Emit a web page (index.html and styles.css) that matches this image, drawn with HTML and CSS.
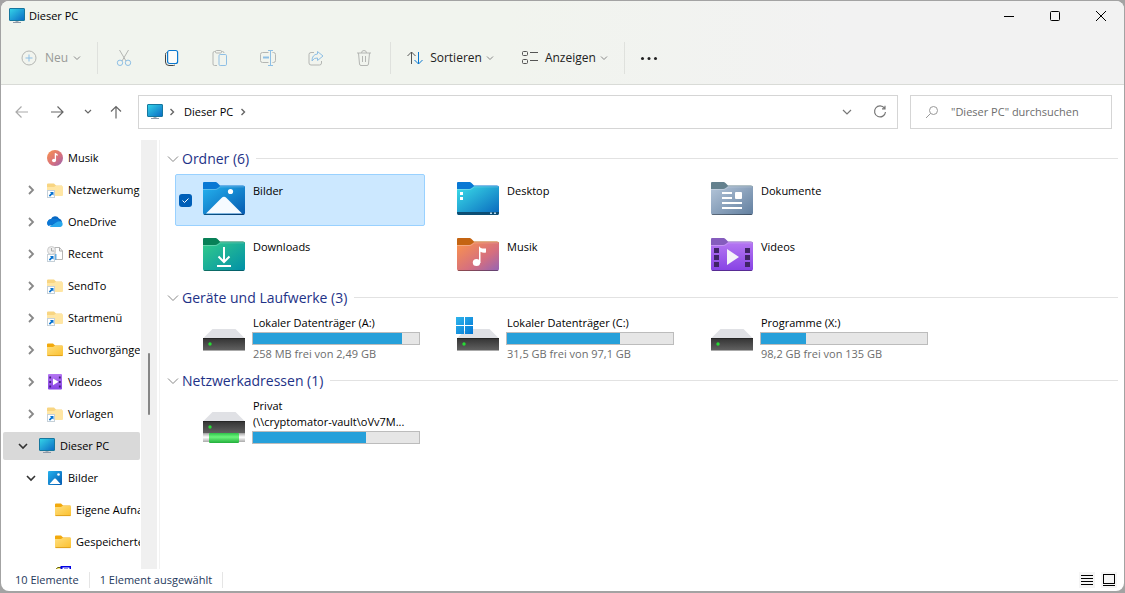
FILE: index.html
```html
<!DOCTYPE html>
<html lang="de">
<head>
<meta charset="utf-8">
<title>Dieser PC</title>
<link rel="stylesheet" href="styles.css">
</head>
<body>
<svg class="defs" aria-hidden="true">
  <defs>
    <linearGradient id="g-pc" x1="0" y1="0" x2="1" y2="1"><stop offset="0" stop-color="#35d5e8"/><stop offset="1" stop-color="#0a69c4"/></linearGradient>
    <linearGradient id="g-blue" x1="0" y1="0" x2="1" y2="1"><stop offset="0" stop-color="#25b2ee"/><stop offset="1" stop-color="#0459b0"/></linearGradient>
    <linearGradient id="g-desk" x1="0" y1="0" x2="1" y2="1"><stop offset="0" stop-color="#3bdde8"/><stop offset="1" stop-color="#0866bd"/></linearGradient>
    <linearGradient id="g-doc" x1="0" y1="0" x2="1" y2="1"><stop offset="0" stop-color="#b4c5d9"/><stop offset="1" stop-color="#627f9f"/></linearGradient>
    <linearGradient id="g-down" x1="0" y1="0" x2="1" y2="1"><stop offset="0" stop-color="#33cb8b"/><stop offset="1" stop-color="#008fa8"/></linearGradient>
    <linearGradient id="g-music" x1="0" y1="0" x2="1" y2="1"><stop offset="0" stop-color="#fb944c"/><stop offset=".6" stop-color="#d56f7f"/><stop offset="1" stop-color="#9464b5"/></linearGradient>
    <linearGradient id="g-video" x1="0" y1="0" x2="0" y2="1"><stop offset="0" stop-color="#b577f2"/><stop offset="1" stop-color="#8642e4"/></linearGradient>
    <linearGradient id="g-yellow" x1="0" y1="0" x2="1" y2="1"><stop offset="0" stop-color="#ffdf7e"/><stop offset="1" stop-color="#fbc02e"/></linearGradient>
    <linearGradient id="g-drive" x1="0" y1="0" x2="0" y2="1"><stop offset="0" stop-color="#333"/><stop offset="1" stop-color="#606060"/></linearGradient>
    <linearGradient id="g-win" x1="0" y1="0" x2="1" y2="1"><stop offset="0" stop-color="#2fb5ec"/><stop offset="1" stop-color="#0276d4"/></linearGradient>
    <linearGradient id="g-pipe" x1="0" y1="0" x2="0" y2="1"><stop offset="0" stop-color="#2fc24a"/><stop offset=".4" stop-color="#6bf57c"/><stop offset="1" stop-color="#22ae3b"/></linearGradient>
    <linearGradient id="g-tube" x1="0" y1="0" x2="0" y2="1"><stop offset="0" stop-color="#bbb"/><stop offset=".4" stop-color="#fff"/><stop offset="1" stop-color="#aaa"/></linearGradient>
  </defs>
  <symbol id="i-pc" viewBox="0 0 16 16"><path d="M6.500 12h3v2h-3z" fill="#a4acb5"/><path d="M4 14h8v1H4z" fill="#8d98a8"/><rect x=".5" y=".5" width="15" height="12" rx=".5" fill="url(#g-pc)" stroke="#16779e"/></symbol>
  <symbol id="i-folder" viewBox="0 0 16 16"><path d="M0 12V2.500Q0 1.500 1 1.500h5L8 3.500h7.500V13H1Z" fill="#f2a90c"/><path d="M0 5h6l1.500-1H15q1 0 1 1v8q0 1-1 1H1q-1 0-1-1Z" fill="url(#g-yellow)"/><path d="M.5 13.600h15" stroke="#dfa01d"/></symbol>
  <symbol id="i-link" viewBox="0 0 16 16"><path d="M0 12V2.500Q0 1.500 1 1.500h6L9 3.500h6V13H1Z" fill="#f8d582"/><path d="M0 5h7l1.500-1H15q1 0 1 1v8q0 1-1 1H1q-1 0-1-1Z" fill="#ffe6a4"/><use href="#i-arrow"/></symbol>
  <symbol id="i-arrow" viewBox="0 0 16 16"><rect x=".5" y="8.500" width="7" height="7" fill="#fff" stroke="#c5d0d8"/><path d="M3 10h3.500v3.500L5.200 12.500 3 14.700 1.800 13.500 4 11.200Z" fill="#0873d0"/></symbol>
  <symbol id="i-cloud" viewBox="0 0 16 16"><path d="M1 11a4 4 0 0 1 3-6 4.500 4.500 0 0 1 8-.5A4 4 0 0 1 15 8L7 12Z" fill="#0868c2"/><path d="M4 5a4 4 0 0 0-2.500 7L8 9 13 7Q11 4 4 5Z" fill="#0b77d5"/><path d="M2.500 12.700 9 8.500Q11 7 13.500 7.200A3 3 0 0 1 13.500 13H4Z" fill="#29a8ec"/></symbol>
  <symbol id="i-recent" viewBox="0 0 16 16"><path d="M8 13.500V1.500h4.500L15.500 5v8.500Z" fill="#fff" stroke="#b6b6b6"/><path d="M12.500 1.500V5h3" fill="none" stroke="#aaa"/><circle cx="4.500" cy="4.500" r="4" fill="#eee" stroke="#ccc"/><path d="M4.500 2v3h3" fill="none" stroke="#aaa"/><path d="M8.500 8v6" stroke="#6aaee1" stroke-width="2"/><use href="#i-arrow"/></symbol>
  <symbol id="i-note" viewBox="0 0 16 16"><circle cx="8" cy="8" r="8" fill="url(#g-music)"/><ellipse cx="7" cy="10.500" rx="2" ry="1.800" fill="#fff"/><path d="M8.400 10.500V3.200q.3 1.800 2.400 2" fill="none" stroke="#fff" stroke-width="1.300"/></symbol>
  <symbol id="i-film" viewBox="0 0 16 16"><rect x="1" width="14" height="15.500" rx="1" fill="url(#g-video)"/><path d="M3.200 2.500v12M12.800 2.500v12" stroke="#422078" stroke-width="1.800" stroke-dasharray="2 2.500"/><path d="m6 4.500 5.500 3.300L6 11.200Z" fill="#fff"/></symbol>
  <symbol id="i-image" viewBox="0 0 16 16"><rect x="1" y="1" width="14" height="14" rx="1" fill="url(#g-blue)"/><path d="m2.500 14 4.700-5.200q.8-.8 1.600 0L13.500 14Z" fill="#fff"/><circle cx="11.500" cy="4.500" r="1.300" fill="#fff"/></symbol>
  <symbol id="i-media" viewBox="0 0 16 16"><path d="M1.500 12V2.500L3 1.500h5V12Z" fill="#f7ec77" stroke="#686000"/><rect x="6.500" y=".5" width="9" height="12" fill="#fff" stroke="#0000e6" stroke-width="2"/><path d="M9 3h4" stroke="#22c"/></symbol>
  <symbol id="c-down" viewBox="0 0 10 10"><path d="m2 3.500 3 3 3-3" fill="none" stroke="currentColor"/></symbol>
  <symbol id="c-tree" viewBox="0 0 10 10"><path d="m1 3 4 4 4-4" fill="none" stroke="currentColor" stroke-width="1.600"/></symbol>
  <symbol id="c-treer" viewBox="0 0 10 10"><path d="m3 1 4 4-4 4" fill="none" stroke="currentColor" stroke-width="1.800"/></symbol>
  <symbol id="c-group" viewBox="0 0 12 12"><path d="m1 3.500 5 5 5-5" fill="none" stroke="currentColor"/></symbol>
  <symbol id="f-body" viewBox="0 0 42 34"><path d="M0 8V2Q0 1 1 1h11.500q1 0 2 1l2.500 2.500H40q2 0 2 2V31H0Z"/></symbol>
  <symbol id="f-front" viewBox="0 0 42 34"><path d="M0 8h12q1.500 0 3-1.200L17 5.300h23.500q1.500 0 1.500 1.500V32q0 2-2 2H2q-2 0-2-2Z"/><path d="M1 33.500h40" stroke="#000" stroke-opacity=".35"/><path d="M0 8.500h12.500q1.500 0 2.800-1.200L17 5.800h24" fill="none" stroke="#fff" stroke-opacity=".25"/></symbol>
  <symbol id="i-drive" viewBox="0 0 42 34"><path d="M9.500 12h23L42 21.500H0Z" fill="#e0e1e5"/><path d="M0 21h42v12H0Z" fill="url(#g-drive)"/><path d="M0 21.500h42" stroke="#262626"/><path d="M0 33.500h42" stroke="#aaa"/><circle cx="7" cy="27" r="1.700" fill="#26dc34"/></symbol>
</svg>

<div class="window">
  <header class="top">
    <div class="titlebar">
      <svg class="ic16"><use href="#i-pc"/></svg>
      <h1 class="title">Dieser PC</h1>
      <div class="caption">
        <button class="cap" aria-label="Minimieren"><svg viewBox="0 0 12 12"><path d="M1 6.500h10"/></svg></button>
        <button class="cap" aria-label="Maximieren"><svg viewBox="0 0 12 12"><rect x="1.500" y="1.500" width="9" height="9" rx="1"/></svg></button>
        <button class="cap" aria-label="Schließen"><svg viewBox="0 0 12 12"><path d="m1 1 10 10M11 1 1 11"/></svg></button>
      </div>
    </div>
    <div class="toolbar">
      <button class="cmd cmd-new" disabled><svg class="ic16" viewBox="0 0 16 16"><circle cx="8" cy="8" r="7" stroke="#b4b6b3"/><path d="M8 4.500v7M4.500 8h7" stroke="#8ebfe5"/></svg>Neu<svg class="ic10"><use href="#c-down"/></svg></button>
      <span class="sep"></span>
      <button class="tool" aria-label="Ausschneiden" disabled><svg viewBox="0 0 18 18"><path d="m4.500 1 6.500 11M13.500 1 7 12" stroke="#b4b6b3"/><circle cx="5" cy="13.800" r="2.700" stroke="#8ebfe5"/><circle cx="13" cy="13.800" r="2.700" stroke="#8ebfe5"/></svg></button>
      <button class="tool" aria-label="Kopieren"><svg viewBox="0 0 18 18"><path d="M3.500 3.500q-1 .5-1 2V13q0 3.500 3.500 3.500h4.500q1 0 1.500-.8" stroke="#444"/><rect x="4.600" y="1.500" width="10" height="13" rx="2" fill="#fbfcfa" stroke="#0a78cf" stroke-width="1.200"/></svg></button>
      <button class="tool" aria-label="Einfügen" disabled><svg viewBox="0 0 18 18"><path d="M4.500 2.500h-1q-1.500 0-1.500 1.500v11q0 1.500 1.500 1.500H6M10.500 2.500h1q1.500 0 1.500 1.500" stroke="#b4b6b3"/><rect x="4.500" y="1.500" width="6" height="2.500" rx="1" stroke="#b4b6b3"/><rect x="8" y="5.500" width="7.500" height="11" rx="1.200" stroke="#8ebfe5"/></svg></button>
      <button class="tool" aria-label="Umbenennen" disabled><svg viewBox="0 0 18 18"><path d="M9.500 3.500h-6Q1.500 3.500 1.500 5.500v6q0 2 2 2h6M13.500 3.500h1q2 0 2 2v6q0 2-2 2h-1" stroke="#b4b6b3"/><path d="M9 1.500h5M11.500 1.500v15M9 16.500h5" stroke="#8ebfe5"/><path d="M4 8.500h6" stroke="#8ebfe5" stroke-width="2"/></svg></button>
      <button class="tool" aria-label="Freigeben" disabled><svg viewBox="0 0 18 18"><path d="M7 3.500H4Q2 3.500 2 5.500V14q0 2 2 2h8.500q2 0 2-2v-2" stroke="#b4b6b3"/><path d="M10.500 2.500 16 7l-5.500 4.500V9Q7 8.500 5 12q0-6.500 5.500-7Z" stroke="#8ebfe5"/></svg></button>
      <button class="tool" aria-label="Löschen" disabled><svg viewBox="0 0 18 18"><path d="M2 4h14M6.500 4q0-2.500 2.500-2.500T11.500 4M3.500 4l1 11q.2 1.500 1.500 1.500h6q1.300 0 1.500-1.500l1-11M7.500 7v6M10.500 7v6" stroke="#b4b6b3"/></svg></button>
      <span class="sep"></span>
      <button class="cmd"><svg class="ic16" viewBox="0 0 16 16"><path d="M4.500 14V2M.5 6l4-4 4 4" stroke="#555"/><path d="M11.500 2v12M7.500 10l4 4 4-4" stroke="#0a78cf"/></svg>Sortieren<svg class="ic10"><use href="#c-down"/></svg></button>
      <button class="cmd"><svg class="ic16" viewBox="0 0 16 16" stroke="#555"><rect x=".5" y="1.500" width="5" height="4" rx="1"/><rect x=".5" y="9.500" width="5" height="4" rx="1"/><path d="M8 2.500h8M8 10.500h8"/></svg>Anzeigen<svg class="ic10"><use href="#c-down"/></svg></button>
      <span class="sep"></span>
      <button class="tool more" aria-label="Mehr anzeigen"><svg viewBox="0 0 18 18"><g fill="#222"><circle cx="2.500" cy="9.500" r="1.500"/><circle cx="9" cy="9.500" r="1.500"/><circle cx="15.500" cy="9.500" r="1.500"/></g></svg></button>
    </div>
  </header>

  <div class="addressrow">
    <button class="nav-btn dim" aria-label="Zurück"><svg viewBox="0 0 14 14"><path d="M13 7H1M6.500 1.500 1 7l5.500 5.500"/></svg></button>
    <button class="nav-btn" aria-label="Vorwärts"><svg viewBox="0 0 14 14"><path d="M1 7h12M7.500 1.500 13 7l-5.500 5.500"/></svg></button>
    <button class="nav-btn narrow" aria-label="Zuletzt besucht"><svg viewBox="0 0 14 14"><path d="m4 5 3 3 3-3"/></svg></button>
    <button class="nav-btn" aria-label="Nach oben"><svg viewBox="0 0 14 14"><path d="M7 13.500V1.500M2 6.500l5-5 5 5"/></svg></button>
    <nav class="address" aria-label="Adresse">
      <svg class="ic16"><use href="#i-pc"/></svg>
      <svg class="crumb" viewBox="0 0 10 10"><path d="m3.500 2 3 3-3 3"/></svg>
      <a href="#" class="crumb-text">Dieser PC</a>
      <svg class="crumb" viewBox="0 0 10 10"><path d="m3.500 2 3 3-3 3"/></svg>
      <button class="addr-btn push" aria-label="Verlauf"><svg viewBox="0 0 14 14"><path d="m3 5 4 4 4-4"/></svg></button>
      <button class="addr-btn" aria-label="Aktualisieren"><svg viewBox="0 0 14 14"><path d="M11.500 3.200A5.500 5.500 0 1 0 12.500 7M12 .8v3H9"/></svg></button>
    </nav>
    <div class="search">
      <svg viewBox="0 0 14 14"><circle cx="8.500" cy="5.500" r="4"/><path d="M5.500 8.500 1 13"/></svg>
      <input type="search" aria-label="Suche" placeholder="&quot;Dieser PC&quot; durchsuchen">
    </div>
  </div>

  <div class="main">
    <nav class="tree" aria-label="Navigationsbereich">
      <a href="#" class="node l1"><span class="tw"></span><svg class="ic16"><use href="#i-note"/></svg>Musik</a>
      <a href="#" class="node l1"><svg class="tw"><use href="#c-treer"/></svg><svg class="ic16"><use href="#i-link"/></svg>Netzwerkumgebung</a>
      <a href="#" class="node l1"><svg class="tw"><use href="#c-treer"/></svg><svg class="ic16"><use href="#i-cloud"/></svg>OneDrive</a>
      <a href="#" class="node l1"><svg class="tw"><use href="#c-treer"/></svg><svg class="ic16"><use href="#i-recent"/></svg>Recent</a>
      <a href="#" class="node l1"><svg class="tw"><use href="#c-treer"/></svg><svg class="ic16"><use href="#i-link"/></svg>SendTo</a>
      <a href="#" class="node l1"><svg class="tw"><use href="#c-treer"/></svg><svg class="ic16"><use href="#i-link"/></svg>Startmenü</a>
      <a href="#" class="node l1"><svg class="tw"><use href="#c-treer"/></svg><svg class="ic16"><use href="#i-folder"/></svg>Suchvorgänge</a>
      <a href="#" class="node l1"><svg class="tw"><use href="#c-treer"/></svg><svg class="ic16"><use href="#i-film"/></svg>Videos</a>
      <a href="#" class="node l1"><svg class="tw"><use href="#c-treer"/></svg><svg class="ic16"><use href="#i-link"/></svg>Vorlagen</a>
      <a href="#" class="node selected"><svg class="tw open"><use href="#c-tree"/></svg><svg class="ic16"><use href="#i-pc"/></svg>Dieser PC</a>
      <a href="#" class="node l1"><svg class="tw open"><use href="#c-tree"/></svg><svg class="ic16"><use href="#i-image"/></svg>Bilder</a>
      <a href="#" class="node l2"><span class="tw"></span><svg class="ic16"><use href="#i-folder"/></svg>Eigene Aufnahmen</a>
      <a href="#" class="node l2"><span class="tw"></span><svg class="ic16"><use href="#i-folder"/></svg>Gespeicherte Bilder</a>
      <a href="#" class="node l2" aria-label="Medien"><span class="tw"></span><svg class="ic16"><use href="#i-media"/></svg></a>
    </nav>
    <div class="scrollbar"><div class="thumb"></div></div>

    <main class="content">
      <section>
        <h2 class="group"><svg class="ic12"><use href="#c-group"/></svg>Ordner (6)</h2>
        <div class="tiles">
          <label class="tile chosen"><span class="check"><input type="checkbox" checked></span>
            <svg class="big" viewBox="0 0 42 34"><use href="#f-body" fill="#0878d4"/><use href="#f-front" fill="url(#g-blue)"/><path d="M3 32.500 18.500 17q2.500-2.500 5 0L39 32.500Z" fill="#f6fbff"/><circle cx="27.500" cy="10.500" r="2.600" fill="#fff"/></svg>
            <span class="info">Bilder</span></label>
          <div class="tile"><span class="check"></span>
            <svg class="big" viewBox="0 0 42 34"><use href="#f-body" fill="#0878d4"/><use href="#f-front" fill="url(#g-desk)"/><path d="M0 31h42v1q0 2-2 2H2q-2 0-2-2Z" fill="#0d4e74"/><path d="M3 11h3v3H3zM3 16h3v3H3z" fill="#fff"/><path d="M33 31.500h2v1.500h-2zM37 31.500h2v1.500h-2z" fill="#b6d8ef"/></svg>
            <span class="info">Desktop</span></div>
          <div class="tile"><span class="check"></span>
            <svg class="big" viewBox="0 0 42 34"><use href="#f-body" fill="#64818e"/><use href="#f-front" fill="url(#g-doc)"/><path d="M11 12h10M11 17h10M11 22h20M11 27h20" stroke="#fff" stroke-width="2"/><rect x="24" y="11" width="7" height="7" rx="1" fill="#fff"/></svg>
            <span class="info">Dokumente</span></div>
          <div class="tile"><span class="check"></span>
            <svg class="big" viewBox="0 0 42 34"><use href="#f-body" fill="#088057"/><use href="#f-front" fill="url(#g-down)"/><path d="M21 10v15M15.500 19.500 21 25l5.500-5.500M14 29h14" fill="none" stroke="#fff" stroke-width="2"/></svg>
            <span class="info">Downloads</span></div>
          <div class="tile"><span class="check"></span>
            <svg class="big" viewBox="0 0 42 34"><use href="#f-body" fill="#c46412"/><use href="#f-front" fill="url(#g-music)"/><ellipse cx="19.500" cy="25.500" rx="3.700" ry="3.500" fill="#fff"/><path d="M22 26V9q1 3 7 2.500v4q-3 1-5.500-.8V26Z" fill="#fff"/></svg>
            <span class="info">Musik</span></div>
          <div class="tile"><span class="check"></span>
            <svg class="big" viewBox="0 0 42 34"><use href="#f-body" fill="#855cbd"/><use href="#f-front" fill="url(#g-video)"/><path d="M3 11h5v5H3zM3 18h5v5H3zM3 25h5v5H3zM34 11h5v5h-5zM34 18h5v5h-5zM34 25h5v5h-5z" fill="#402466"/><path d="m16 12 12 8-12 8Z" fill="#f5f3f8"/></svg>
            <span class="info">Videos</span></div>
        </div>
      </section>
      <section>
        <h2 class="group"><svg class="ic12"><use href="#c-group"/></svg>Geräte und Laufwerke (3)</h2>
        <div class="tiles">
          <div class="tile drive"><span class="check"></span><svg class="big"><use href="#i-drive"/></svg>
            <div class="info"><span>Lokaler Datenträger (A:)</span><div class="bar"><div class="fill" style="width:90%"></div></div><span class="free">258 MB frei von 2,49 GB</span></div></div>
          <div class="tile drive"><span class="check"></span><svg class="big" viewBox="0 0 42 34"><use href="#i-drive"/><path d="M-1 0h8v8h-8zM8 0h8v8H8zM-1 9h8v8h-8zM8 9h8v8H8z" fill="url(#g-win)"/></svg>
            <div class="info"><span>Lokaler Datenträger (C:)</span><div class="bar"><div class="fill" style="width:68%"></div></div><span class="free">31,5 GB frei von 97,1 GB</span></div></div>
          <div class="tile drive"><span class="check"></span><svg class="big"><use href="#i-drive"/></svg>
            <div class="info"><span>Programme (X:)</span><div class="bar"><div class="fill" style="width:27%"></div></div><span class="free">98,2 GB frei von 135 GB</span></div></div>
        </div>
      </section>
      <section>
        <h2 class="group"><svg class="ic12"><use href="#c-group"/></svg>Netzwerkadressen (1)</h2>
        <div class="tiles">
          <div class="tile drive"><span class="check"></span><svg class="big" viewBox="0 0 42 34"><use href="#i-drive"/><rect y="34" width="42" height="8" fill="url(#g-tube)"/><rect x="6" y="33" width="30" height="10" rx="1" fill="url(#g-pipe)"/></svg>
            <div class="info"><span>Privat</span><span class="path">(\\cryptomator-vault\oVv7M...</span><div class="bar"><div class="fill" style="width:68%"></div></div></div></div>
        </div>
      </section>
    </main>
  </div>

  <footer class="status">
    <span class="stat">10 Elemente</span><span class="stat">1 Element ausgewählt</span>
    <div class="views">
      <button class="view" aria-label="Details"><svg viewBox="0 0 16 16"><path d="M2 3.500h12M2 6.500h12M2 9.500h12M2 12.500h12"/></svg></button>
      <button class="view" aria-label="Große Symbole"><svg viewBox="0 0 16 16"><rect x="2.500" y="2.500" width="11" height="9"/><path d="M2 13.500h12"/></svg></button>
    </div>
  </footer>
</div>
</body>
</html>
```

FILE: styles.css
```css
* { box-sizing: border-box; }
html, body { height: 100%; margin: 0; }
body {
  display: flex;
  padding: 1px 1px 2px 1px;
  background: #a3a3a3;
  color: #000;
  font: 11px/16px "Open Sans", "Noto Sans", sans-serif;
}
button { border: 0; padding: 0; background: none; color: inherit; font: inherit; }
a { color: inherit; text-decoration: none; }
h1, h2 { margin: 0; font: inherit; }
svg { display: block; flex: none; fill: none; overflow: visible; }
.defs { position: absolute; width: 0; height: 0; }
.ic16 { width: 16px; height: 16px; }
.ic12 { width: 12px; height: 12px; }
.ic10 { width: 10px; height: 10px; }

.window { flex: 1; min-width: 0; display: flex; flex-direction: column; overflow: hidden; border-radius: 8px; background: #fff; }

.top { border-bottom: 1px solid #d9dbd7; background: linear-gradient(90deg, #f1f4ee 45%, #f2f2f2 75%); }
.titlebar { display: flex; align-items: center; height: 29px; padding-left: 8px; gap: 4px; }
.caption { display: flex; margin-left: auto; }
.cap { display: grid; place-items: center; width: 46px; height: 28px; }
.cap svg { width: 12px; height: 12px; stroke: #000; }
.toolbar { display: flex; align-items: center; height: 54px; padding-top: 2px; }
.sep { width: 1px; height: 32px; background: #dfe1dd; }
.cmd { display: flex; align-items: center; gap: 7px; height: 32px; margin-left: 16px; font-size: 12px; color: #222; }
.cmd .ic10 { margin-left: -4px; color: #888; }
.cmd + .cmd { margin-left: 27px; }
.cmd + .sep { margin-left: 15px; }
.cmd-new { gap: 8px; margin-left: 20px; color: #989a97; }
.tool { display: grid; place-items: center; width: 48px; height: 32px; }
.sep + .tool { margin-left: 2px; }
.sep + .more { margin-left: 0; }
.tool + .sep { margin-left: 2px; }
.tool svg { width: 18px; height: 18px; }

.addressrow { display: flex; align-items: center; height: 55px; padding: 0 12px 2px 6px; }
.nav-btn { display: grid; place-items: center; width: 30px; height: 32px; margin-right: 5px; color: #666; }
.nav-btn.dim { color: #aaa; }
.nav-btn.narrow { width: 22px; margin-right: 2px; }
.nav-btn svg, .addr-btn svg { width: 14px; height: 14px; stroke: currentColor; stroke-width: 1.2; }
.address { flex: 1; display: flex; align-items: center; gap: 4px; height: 34px; margin-left: 2px; padding: 0 5px 0 8px; border: 1px solid #d5d5d5; }
.crumb { width: 10px; height: 10px; stroke: #666; stroke-width: 1.4; }
.addr-btn { display: grid; place-items: center; width: 24px; height: 24px; color: #777; }
.push { margin-left: auto; margin-right: 5px; }
.crumb-text { padding: 0 1px 0 3px; }
.search { flex: none; display: flex; align-items: center; gap: 12px; width: 202px; height: 34px; margin-left: 12px; padding: 0 14px; border: 1px solid #d5d5d5; }
.search svg { width: 14px; height: 14px; stroke: #999; }
.search input { flex: 1; min-width: 0; border: 0; padding: 0; outline: 0; background: none; font: inherit; }
.search input::placeholder { color: #6d6d6d; opacity: 1; }

.main { flex: 1; min-height: 0; display: flex; }
.tree { flex: none; display: flex; flex-direction: column; gap: 4px; width: 139px; padding: 4px 0 0 2px; overflow: hidden; }
.node { flex: none; display: flex; align-items: center; gap: 5px; height: 28px; padding-left: 15px; white-space: nowrap; overflow: hidden; }
.node .tw { flex: none; width: 10px; height: 10px; margin-right: 6px; color: #888; }
.node .open { color: #333; }
.node.l1 { padding-left: 23px; }
.node.l2 { padding-left: 31px; }
.selected { background: #d9d9d9; border-radius: 2px; }
.scrollbar { flex: none; width: 17px; margin-right: 2px; padding-top: 213px; border-left: 1px solid #fff; background: #f0f0f0; }
.thumb { width: 2px; height: 62px; margin-left: 7px; border-radius: 1px; background: #868686; }
.content { flex: 1; min-width: 0; padding: 3px 6px 0 7px; border-left: 1px solid #f2f2f2; overflow: hidden; }
.group { display: flex; align-items: center; gap: 3px; height: 31px; color: #1e3287; font-size: 14px; line-height: 20px; }
.group svg { color: #888; }
.group::after { content: ""; flex: 1; height: 1px; margin-left: 4px; background: #e2e2e2; }
.tiles { display: grid; grid-template-columns: repeat(auto-fill, 250px); gap: 4px; margin-left: 8px; }
.tile { display: flex; min-height: 52px; padding: 0 4px 0 3px; border: 1px solid transparent; border-radius: 2px; }
.chosen { border-color: #99d1ff; background: #cce8ff; }
.check { display: grid; place-items: center start; flex: none; width: 14px; margin-right: 10px; }
.check input {
  appearance: none; width: 13px; height: 13px; margin: 0; border-radius: 3px;
  background: #005fb8 url("data:image/svg+xml,%3Csvg xmlns='http://www.w3.org/2000/svg' viewBox='0 0 13 13'%3E%3Cpath d='m3.500 6.500 2 2 4-4' fill='none' stroke='white'/%3E%3C/svg%3E");
}
.big { width: 42px; height: 34px; margin-top: 6px; }
.info { flex: 1; min-width: 0; display: flex; flex-direction: column; padding: 8px 0 0 8px; }
.drive .big { margin-top: 3px; }
.drive .info { padding-top: 1px; white-space: nowrap; }
.path { line-height: 16px; }
.bar { flex: none; height: 13px; margin: 1px 0 0 -1px; border: 1px solid #bcbcbc; background: #e6e6e6; }
.fill { height: 100%; background: #26a0da; }
.free { color: #6d6d6d; line-height: 18px; }

.status { display: flex; align-items: center; height: 22px; padding: 0 7px 0 14px; color: #1e395b; }
.stat { padding-right: 10px; margin-right: 10px; border-right: 1px solid #e5e5e5; line-height: 16px; }
.views { display: flex; gap: 6px; margin-left: auto; }
.view { width: 16px; height: 16px; background: #f5f5f5; }
.view svg { width: 16px; height: 16px; stroke: #000; }
```
